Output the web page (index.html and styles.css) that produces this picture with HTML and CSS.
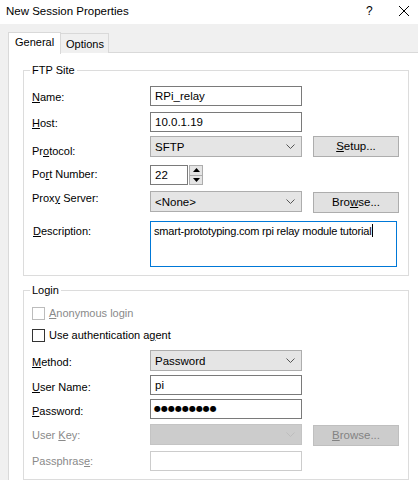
FILE: index.html
```html
<!DOCTYPE html>
<html>
<head>
<meta charset="utf-8">
<link rel="stylesheet" href="styles.css">
</head>
<body>
<div class="window">
  <div class="titlebar">
    <span class="title">New Session Properties</span>
    <span class="help">?</span>
    <svg class="close" width="12" height="12" viewBox="0 0 12 12"><path d="M1 1 L11 11 M11 1 L1 11" stroke="#000" stroke-width="1" fill="none"/></svg>
  </div>
  <div class="tabs">
    <div class="tab active">General</div>
    <div class="tab">Options</div>
  </div>
  <div class="panel">
    <fieldset class="group ftp">
      <legend>FTP Site</legend>
      <div class="row">
        <span class="lbl p4"><u>N</u>ame:</span>
        <div class="edit">RPi_relay</div>
      </div>
      <div class="row m6">
        <span class="lbl p4"><u>H</u>ost:</span>
        <div class="edit">10.0.1.19</div>
      </div>
      <div class="row m4">
        <span class="lbl p8">Pr<u>o</u>tocol:</span>
        <div class="combo">SFTP<svg class="chev" width="9" height="5" viewBox="0 0 9 5"><path d="M0.5 0.5 L4.5 4.5 L8.5 0.5" stroke="#555" fill="none"/></svg></div>
        <div class="btn"><u>S</u>etup...</div>
      </div>
      <div class="row m7">
        <span class="lbl p2">Po<u>r</u>t Number:</span>
        <div class="edit port">22</div>
        <div class="spin">
          <div class="spin-half"><svg width="7" height="4" viewBox="0 0 7 4"><path d="M0 4 L3.5 0 L7 4 Z" fill="#000"/></svg></div>
          <div class="spin-half"><svg width="7" height="4" viewBox="0 0 7 4"><path d="M0 0 L3.5 4 L7 0 Z" fill="#000"/></svg></div>
        </div>
      </div>
      <div class="row m6">
        <span class="lbl p0">Prox<u>y</u> Server:</span>
        <div class="combo">&lt;None&gt;<svg class="chev" width="9" height="5" viewBox="0 0 9 5"><path d="M0.5 0.5 L4.5 4.5 L8.5 0.5" stroke="#555" fill="none"/></svg></div>
        <div class="btn btn-browse">Bro<u>w</u>se...</div>
      </div>
      <div class="row m8">
        <span class="lbl p3 desc-lbl"><u>D</u>escription:</span>
        <div class="memo">smart-prototyping.com rpi relay module tutorial<span class="caret"></span></div>
      </div>
    </fieldset>
    <fieldset class="group login">
      <legend>Login</legend>
      <div class="check disabled"><span class="box"></span><span><u>A</u>nonymous login</span></div>
      <div class="check m9"><span class="box"></span><span>Use authentication a<u>g</u>ent</span></div>
      <div class="row m8">
        <span class="lbl p5"><u>M</u>ethod:</span>
        <div class="combo">Password<svg class="chev" width="9" height="5" viewBox="0 0 9 5"><path d="M0.5 0.5 L4.5 4.5 L8.5 0.5" stroke="#555" fill="none"/></svg></div>
      </div>
      <div class="row m4">
        <span class="lbl p5"><u>U</u>ser Name:</span>
        <div class="edit">pi</div>
      </div>
      <div class="row m4">
        <span class="lbl p5"><u>P</u>assword:</span>
        <div class="edit dots">●●●●●●●●●</div>
      </div>
      <div class="row m5">
        <span class="lbl p4 dim">User <u>K</u>ey:</span>
        <div class="combo off"><svg class="chev" width="9" height="5" viewBox="0 0 9 5"><path d="M0.5 0.5 L4.5 4.5 L8.5 0.5" stroke="#bdbdbd" fill="none"/></svg></div>
        <div class="btn off"><u>B</u>rowse...</div>
      </div>
      <div class="row m5">
        <span class="lbl p3 dim">Passphras<u>e</u>:</span>
        <div class="edit off"></div>
      </div>
    </fieldset>
  </div>
</div>
</body>
</html>
```

FILE: styles.css
```css
html, body {
  margin: 0;
  padding: 0;
}
body {
  width: 418px;
  height: 480px;
  overflow: hidden;
  background: #f0f0f0;
  font-family: "Liberation Sans", Arial, sans-serif;
  font-size: 11px;
  color: #000;
}
.window {
  width: 418px;
  height: 480px;
  overflow: hidden;
}
.titlebar {
  height: 24px;
  background: #fff;
  display: flex;
  align-items: center;
  padding-left: 6px;
}
.title {
  font-size: 11.5px;
  flex: 1;
  position: relative;
  top: -1px;
}
.help {
  font-size: 12px;
  width: 32px;
  position: relative;
  top: -1px;
}
.close {
  margin-right: 8px;
  position: relative;
  top: -1px;
}
.tabs {
  display: flex;
  align-items: flex-end;
  height: 28px;
  padding-left: 8px;
  position: relative;
  z-index: 1;
}
.tab {
  box-sizing: border-box;
  border: 1px solid #d9d9d9;
  border-bottom: none;
  background: #f0f0f0;
  padding: 3px 4px 0 5px;
  margin-bottom: -1px;
  line-height: 14px;
  height: 20px;
}
.tab.active {
  background: #fff;
  height: 22px;
  padding: 2px 6px 0 6px;
  border-right: 1px solid #d9d9d9;
  margin-bottom: -2px;
  width: 53px;
}
.tab + .tab {
  border-left: none;
}
.panel {
  box-sizing: border-box;
  margin-left: 8px;
  width: 420px;
  height: 440px;
  background: #fff;
  border: 1px solid #d9d9d9;
  padding: 10px 0 0 14px;
}
.group {
  margin: 0;
  width: 386px;
  box-sizing: border-box;
  border: 1px solid #dcdcdc;
  padding: 9px 0 8px 8px;
  min-width: 0;
}
.group legend {
  padding: 0 2px;
  margin-left: -2px;
  line-height: 14px;
}
.login {
  margin-top: 7px;
  padding-top: 10px;
}
.row {
  display: flex;
  align-items: flex-start;
}
.m4 { margin-top: 4px; }
.m5 { margin-top: 5px; }
.m6 { margin-top: 6px; }
.m7 { margin-top: 7px; }
.m8 { margin-top: 8px; }
.m9 { margin-top: 9px; }
.lbl {
  width: 118px;
  line-height: 14px;
  flex: none;
}
.p0 { padding-top: 0; }
.p2 { padding-top: 2px; }
.p3 { padding-top: 3px; }
.p4 { padding-top: 4px; }
.p5 { padding-top: 5px; }
.p8 { padding-top: 8px; }
.desc-lbl { padding-left: 1px; width: 117px; }
.dim { color: #8a8a8a; }
.edit {
  box-sizing: border-box;
  width: 152px;
  height: 20px;
  border: 1px solid #7a7a7a;
  background: #fff;
  padding: 0 4px;
  line-height: 18px;
  font-size: 11.5px;
}
.edit.port {
  width: 38px;
}
.edit.dots {
  font-family: "DejaVu Sans", sans-serif;
  font-size: 8px;
  letter-spacing: 0;
  padding-left: 3px;
}
.edit.off {
  border-color: #cccccc;
}
.spin {
  margin-left: 1px;
  width: 14px;
  height: 20px;
  display: flex;
  flex-direction: column;
  box-sizing: border-box;
  border: 1px solid #adadad;
  background: #e5e5e5;
}
.spin-half {
  flex: 1;
  display: flex;
  align-items: center;
  justify-content: center;
}
.spin-half + .spin-half {
  border-top: 1px solid #adadad;
}
.combo {
  box-sizing: border-box;
  width: 152px;
  height: 21px;
  border: 1px solid #adadad;
  background: #e5e5e5;
  padding: 0 4px;
  line-height: 18px;
  font-size: 11.5px;
  display: flex;
  align-items: center;
  justify-content: space-between;
}
.combo.off {
  background: #cccccc;
  border-color: #c4c4c4;
  justify-content: flex-end;
}
.chev {
  margin-right: 2px;
  flex: none;
}
.btn {
  box-sizing: border-box;
  margin-left: 11px;
  width: 86px;
  height: 21px;
  border: 1px solid #adadad;
  background: #e1e1e1;
  text-align: center;
  line-height: 19px;
  font-size: 11.5px;
}
.btn-browse {
  margin-top: 1px;
}
.btn.off {
  background: #cccccc;
  border-color: #bfbfbf;
  color: #838383;
  margin-top: 1px;
}
.memo {
  box-sizing: border-box;
  width: 247px;
  height: 46px;
  border: 1px solid #0078d7;
  background: #fff;
  padding: 2px 2px 0 3px;
  line-height: 14px;
  font-size: 11px;
  letter-spacing: -0.2px;
}
.caret {
  display: inline-block;
  width: 1px;
  height: 13px;
  background: #000;
  vertical-align: -2px;
  margin-left: 1px;
}
.check {
  display: flex;
  align-items: center;
  height: 13px;
  line-height: 13px;
}
.check .box {
  box-sizing: border-box;
  width: 13px;
  height: 13px;
  border: 1px solid #333;
  background: #fff;
  margin-right: 4px;
  flex: none;
}
.check.disabled {
  color: #8a8a8a;
}
.check.disabled .box {
  border-color: #bcbcbc;
}
u {
  text-decoration: underline;
  text-underline-offset: 1px;
}
```
